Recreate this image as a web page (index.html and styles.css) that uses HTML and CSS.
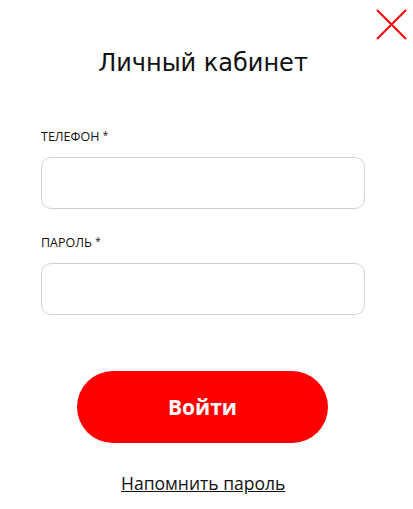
FILE: index.html
```html
<!DOCTYPE html>
<html lang="ru">
<head>
<meta charset="utf-8">
<title>Личный кабинет</title>
<link rel="stylesheet" href="styles.css">
</head>
<body>
<div class="modal">
  <button class="close" aria-label="Закрыть">
    <svg width="31" height="31" viewBox="0 0 31 31"><path d="M1 1 L30 30 M30 1 L1 30" stroke="#ff0000" stroke-width="2" fill="none"/></svg>
  </button>
  <h1 class="title">Личный кабинет</h1>
  <form class="form">
    <label class="field">
      <span class="label">ТЕЛЕФОН <span class="req">*</span></span>
      <input class="input" type="tel">
    </label>
    <label class="field">
      <span class="label">ПАРОЛЬ <span class="req">*</span></span>
      <input class="input" type="password">
    </label>
    <button class="submit" type="button">Войти</button>
    <a class="remind" href="#">Напомнить пароль</a>
  </form>
</div>
</body>
</html>
```
FILE: styles.css
```css
html, body {
  margin: 0;
  padding: 0;
  background: #fff;
}
.modal {
  position: relative;
  width: 413px;
  height: 509px;
  box-sizing: border-box;
  padding-top: 48px;
  font-family: "Open Sans", sans-serif;
  color: #111;
}
.close {
  position: absolute;
  top: 9px;
  left: 376px;
  padding: 0;
  border: 0;
  background: none;
  width: 31px;
  height: 31px;
  display: block;
}
.close svg { display: block; }
.title {
  margin: 0;
  width: 406px;
  text-align: center;
  font-family: "DejaVu Sans", sans-serif;
  font-weight: normal;
  font-size: 24px;
  line-height: 30px;
  color: #111;
}
.form {
  display: flex;
  flex-direction: column;
  padding-left: 41px;
  width: 324px;
  margin-top: 50px;
}
.field {
  display: flex;
  flex-direction: column;
  margin-bottom: 25px;
}
.label {
  display: block;
  height: 17px;
  font-size: 12.5px;
  line-height: 17px;
  color: #111;
  margin-bottom: 12px;
}
.req { font-size: 10px; line-height: 0; vertical-align: 2px; }
.input {
  box-sizing: border-box;
  height: 52px;
  width: 324px;
  border: 1px solid #d2d2d2;
  border-radius: 10px;
  background: #fff;
  margin: 0;
}
.submit {
  align-self: flex-start;
  margin-left: 36px;
  margin-top: 31px;
  width: 251px;
  height: 72px;
  border: 0;
  border-radius: 36px;
  background: #ff0000;
  color: #fff;
  font-family: "Open Sans", sans-serif;
  font-weight: bold;
  font-size: 21px;
}
.remind {
  align-self: flex-start;
  margin-left: 80px;
  margin-top: 28px;
  font-size: 17.5px;
  line-height: 24px;
  color: #111;
  text-decoration: underline;
}
```
